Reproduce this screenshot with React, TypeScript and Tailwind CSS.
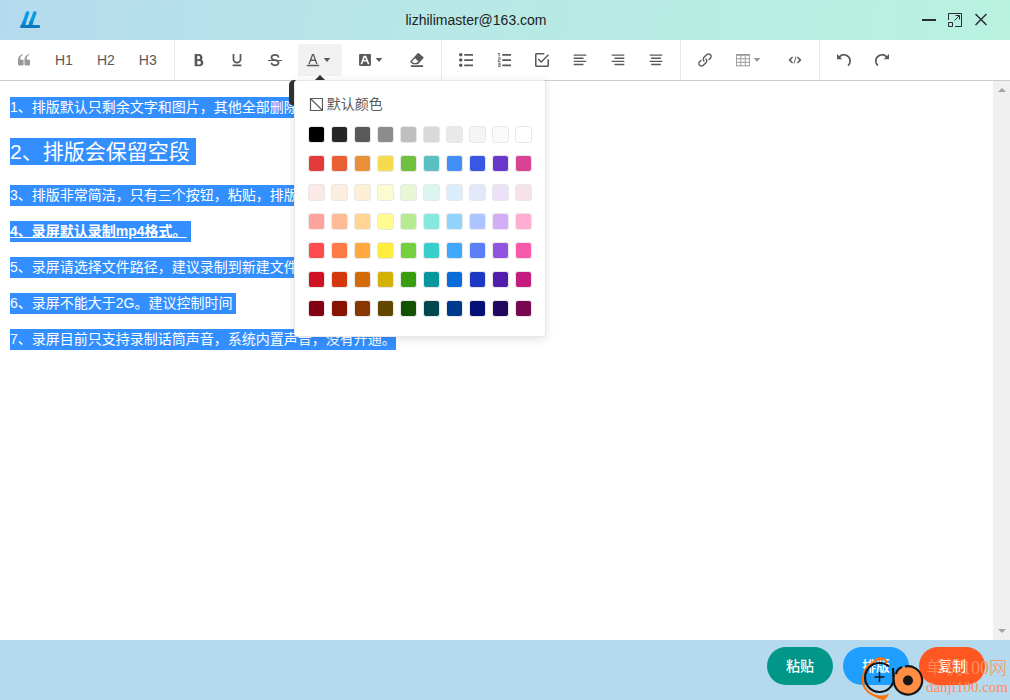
import React from "react";

const ICONS = {
  quote:
    "M894.6 907.1H605.4c-32.6 0-59-26.4-59-59V608.2l-4-14.9c0-315.9 125.5-485.1 376.5-507.5v59.8C752.7 180.4 711.3 315.8 711.3 442.4v41.2l31.5 12.3h151.8c32.6 0 59 26.4 59 59v293.2c0 32.5-26.4 59-59 59z m-472 0H133.4c-32.6 0-59-26.4-59-59V608.2l-4-14.9c0-315.9 125.5-485.1 376.5-507.5v59.8C280.7 180.4 239.3 315.8 239.3 442.4v41.2l31.5 12.3h151.8c32.6 0 59 26.4 59 59v293.2c0 32.5-26.4 59-59 59z",
  bold: "M707.9 484.6A254.9 254.9 0 0 0 768 320c0-141.2-114.8-256-256-256H192v896h384c141.2 0 256-114.8 256-256a256 256 0 0 0-124.1-219.4zM384 192h101.500c56 0 101.500 57.400 101.500 128s-45.500 128-101.500 128H384V192z m159 640H384v-256h159c58.500 0 106 57.400 106 128s-47.500 128-106 128z",
  underline:
    "M704 64h128v416c0 159-143.300 288-320 288s-320-129-320-288V64h128v416c0 40.200 18.200 78.700 51.400 108.500 36.900 33.200 86.800 51.500 140.600 51.500s103.700-18.300 140.600-51.500c33.100-29.800 51.400-68.400 51.400-108.500zM192 832h640v128H192z",
  strike:
    "M1024 512v64H789.500c27.500 38.500 42.500 82.700 42.500 128 0 70.900-36.700 139-100.600 187C672 935.500 594.100 960 512 960s-160-24.500-219.400-69C228.600 843 192 774.900 192 704h128c0 69.400 88 128 192 128s192-58.600 192-128-88-128-192-128H0v-64h299.500l-6.900-5C228.600 459 192 390.900 192 320s36.700-139 100.600-187C352 88.500 429.900 64 512 64s160 24.500 219.400 69C795.300 181 832 249.100 832 320H704c0-69.400-88-128-192-128s-192 58.600-192 128 88 128 192 128c79 0 154 22.700 212.500 64H1024z",
  color:
    "M64 864h896v96H64zM360.600 576h302.800l81.600 224h102.100L579.200 64H444.800L176.900 800H279l81.600-224zM512 160l116.500 320h-233L512 160z",
  background:
    "M510 315l84.700 197H417.500l76.800-197H510zM945.200 157.500v709c0 43.300-35.400 78.700-78.700 78.700h-709c-43.300 0-78.700-35.400-78.700-78.700v-709c0-43.300 35.400-78.700 78.700-78.700h709c43.300 0 78.700 35.400 78.700 78.700z m-108.300 644L600.600 216.600c-5.900-11.800-15.800-19.700-29.500-19.700H431.300c-11.800 0-23.700 7.900-27.600 19.700L187 801.500c-3.900 11.800 4 25.600 17.800 25.600h80.700c11.800 0 23.700-9.900 27.600-21.700l63-175.200H640l69 175.200c3.900 11.800 15.700 21.700 27.500 21.700h80.800c13.800 0 23.600-13.800 19.600-25.600z",
  eraser:
    "M969 289L650 18a67 67 0 0 0-96 6L48 590a68 68 0 0 0 6 103l157 132h373L975 385a67 67 0 0 0-6-96zM440 735H277L137 640l225-249 263 222zM64 896h896v128H64z",
  bullets:
    "M384 64h640v128H384z m0 384h640v128H384z m0 384h640v128H384zM0 128a128 128 0 1 1 256 0 128 128 0 0 1-256 0z m0 384a128 128 0 1 1 256 0 128 128 0 0 1-256 0z m0 384a128 128 0 1 1 256 0 128 128 0 0 1-256 0z",
  numbers:
    "M384 832h640v128H384z m0-384h640v128H384z m0-384h640v128H384zM192 0v256H128V64H64V0zM128 526v50h128v64H64V494l128-60v-50H64v-64h192v146zM256 704v320H64v-64h128v-64H64v-64h128v-64H64v-64z",
  todo: "M278.800 404l-79.700 79.600L455 739.600l569-569L944.400 91 455 580.300 278.800 404zM910.200 910.200H113.800V113.800h569V0h-569C51.200 0 0 51.200 0 113.800v796.400C0 972.800 51.200 1024 113.800 1024h796.400c62.600 0 113.800-51.200 113.800-113.800V455H910.200v455.200z",
  left: "M768 793.600V896H51.200V793.600H768z m204.800-230.400v102.400H51.200V563.200h921.600zM768 332.800v102.400H51.200V332.800H768zM972.800 102.400v102.400H51.200V102.400h921.600z",
  right:
    "M972.800 793.600V896H256V793.600h716.800z m0-230.400v102.400H51.200V563.200h921.600z m0-230.400v102.400H256V332.800h716.800z m0-230.400v102.400H51.200V102.400h921.600z",
  center:
    "M870.400 793.600V896H153.600V793.600h716.800z m102.400-230.400v102.400H51.200V563.200h921.600zM870.400 332.800v102.400H153.600V332.800h716.800zM972.800 102.400v102.400H51.200V102.400h921.600z",
  link: "M440.200 635.800a51.800 51.800 0 0 1-36.800-15.300c-95-95-95-249.900 0-345l192-192C641.500 37.400 702.800 12 768 12s126.400 25.400 172.500 71.500c95.200 95.100 95.200 249.900 0 345l-87.700 87.800a52 52 0 1 1-73.600-73.500l87.800-87.800a140 140 0 0 0 0-198c-26.400-26.400-61.600-41-99-41s-72.500 14.600-99 41l-192 192a140 140 0 0 0 0 198 52 52 0 0 1-36.800 88.800zM256 1012a242.400 242.400 0 0 1-172.500-71.500c-95.200-95-95.200-249.900 0-345l87.700-87.800a52 52 0 1 1 73.600 73.500L157 669a140 140 0 0 0 0 198c26.400 26.400 61.600 41 99 41s72.500-14.600 99-41l192-192a140 140 0 0 0 0-198 52 52 0 1 1 73.500-73.500c95.200 95 95.200 249.900 0 345l-192 192A242.400 242.400 0 0 1 256 1012z",
  table:
    "M0 64v896h1024V64H0z m384 576V448h256v192H384z m256 64v192H384V704h256z m0-512v192H384V192h256zM320 192v192H64V192h256zM64 448h256v192H64V448z m640 0h256v192H704V448z m0-64V192h256v192H704zM64 704h256v192H64V704z m640 192V704h256v192H704z",
  code: "M300 250l70 82-170 180 170 180-70 82L36 512zM724 250l-70 82 170 180-170 180 70 82 264-262zM552 250l64 18-144 506-64-18z",
  undo: "M512 64A510.300 510.300 0 0 0 150 214L0 64v384h384L240.500 304.500A382.800 382.800 0 0 1 512 192c212 0 384 172 384 384 0 114.700-50.300 217.600-130 288l84.700 96A510.700 510.700 0 0 0 1024 576c0-282.800-229.200-512-512-512z",
  redo: "M512 64A510.300 510.300 0 0 1 874 214L1024 64v384H640l143.500-143.500A382.800 382.800 0 0 0 512 192c-212 0-384 172-384 384 0 114.700 50.300 217.600 130 288l-84.700 96A510.700 510.700 0 0 1 0 576C0 293.200 229.200 64 512 64z",
  caret: "M270 366h484L512 658z",
};

type IconName = keyof typeof ICONS;

const Icon = ({ name }: { name: IconName }) => (
  <svg viewBox="0 0 1024 1024" className="size-3.5 shrink-0 fill-current" aria-hidden="true">
    <path d={ICONS[name]} />
  </svg>
);

interface Tool {
  label: string;
  icon?: IconName;
  text?: string;
  menu?: boolean;
  active?: boolean;
  disabled?: boolean;
}

const toolGroups: Tool[][] = [
  [
    { label: "引用", icon: "quote", disabled: true },
    { label: "标题1", text: "H1" },
    { label: "标题2", text: "H2" },
    { label: "标题3", text: "H3" },
  ],
  [
    { label: "粗体", icon: "bold" },
    { label: "下划线", icon: "underline" },
    { label: "删除线", icon: "strike" },
    { label: "文字颜色", icon: "color", menu: true, active: true },
    { label: "背景色", icon: "background", menu: true },
    { label: "清除格式", icon: "eraser" },
  ],
  [
    { label: "无序列表", icon: "bullets" },
    { label: "有序列表", icon: "numbers" },
    { label: "待办", icon: "todo" },
    { label: "左对齐", icon: "left" },
    { label: "右对齐", icon: "right" },
    { label: "居中对齐", icon: "center" },
  ],
  [
    { label: "链接", icon: "link" },
    { label: "表格", icon: "table", menu: true, disabled: true },
    { label: "代码块", icon: "code" },
  ],
  [
    { label: "撤销", icon: "undo" },
    { label: "重做", icon: "redo" },
  ],
];

const palette = [
  ["#000000", "#262626", "#595959", "#8c8c8c", "#bfbfbf", "#d9d9d9", "#e9e9e9", "#f5f5f5", "#fafafa", "#ffffff"],
  ["#e13c39", "#e75f33", "#eb903a", "#f5db4d", "#72c040", "#59bfc0", "#4290f7", "#3658e2", "#6a39c9", "#d84493"],
  ["#fbe9e6", "#fcede1", "#fcefd4", "#fcfbcf", "#e7f6d5", "#daf4f0", "#d9edfa", "#e0e8fa", "#ede1f8", "#f6e2ea"],
  ["#ffa39e", "#ffbb96", "#ffd591", "#fffb8f", "#b7eb8f", "#87e8de", "#91d5ff", "#adc6ff", "#d3adf7", "#ffadd2"],
  ["#ff4d4f", "#ff7a45", "#ffa940", "#ffec3d", "#73d13d", "#36cfc9", "#40a9ff", "#597ef7", "#9254de", "#f759ab"],
  ["#cf1322", "#d4380d", "#d46b08", "#d4b106", "#389e0d", "#08979c", "#096dd9", "#1d39c4", "#531dab", "#c41d7f"],
  ["#820014", "#871400", "#873800", "#614700", "#135200", "#00474f", "#003a8c", "#061178", "#22075e", "#780650"],
];

const ColorPanel = () => (
  <div className="absolute -left-1 top-9 z-20 w-[252px] rounded-[3px] border border-[#e8e8e8] bg-white px-2.5 pt-[9px] pb-[13px] shadow-[0_2px_10px_#0000001f]">
    <button type="button" className="mb-0.5 flex h-7 w-full items-center gap-1 px-1 text-sm text-[#595959]">
      <svg viewBox="0 0 14 14" className="size-3.5 fill-none stroke-current" aria-hidden="true">
        <path d="M1.500 1.500h12v12h-12zM1.500 1.500l12 12" strokeWidth="1.200" />
      </svg>
      默认颜色
    </button>
    <div className="grid grid-cols-10">
      {palette.flat().map((color) => (
        <button key={color} type="button" aria-label={color} className="flex h-[29px] items-center justify-center">
          <span
            className="size-[17px] rounded-[3px] border border-[#e8e8e8]"
            style={{ backgroundColor: color }}
          />
        </button>
      ))}
    </div>
  </div>
);

const ToolButton = ({ tool }: { tool: Tool }) => (
  <div className="relative p-1">
    <button
      type="button"
      aria-label={tool.label}
      disabled={tool.disabled}
      className={`flex h-8 items-center px-2 text-sm ${tool.disabled ? "text-[#999]" : "text-[#595959]"} ${
        tool.active ? "bg-[#f1f1f1]" : ""
      }`}
    >
      {tool.icon ? <Icon name={tool.icon} /> : tool.text}
      {tool.menu && <Icon name="caret" />}
    </button>
    {tool.active && (
      <div className="absolute inset-x-1 top-1">
        <span className="absolute top-[31px] left-1/2 -translate-x-1/2 border-x-5 border-b-5 border-x-transparent border-b-[#333]" />
        <span className="absolute -inset-x-[9px] top-9 z-10 h-[26px] rounded-[5px] bg-[#333]" />
        <ColorPanel />
      </div>
    )}
  </div>
);

const TitleBar = () => (
  <header className="flex h-10 items-center bg-[linear-gradient(100deg,#b5daee,#b7e8e6_45%,#b8f2df)] pr-[22px] pl-5 text-[#2b2b3b]">
    <svg viewBox="0 0 20 20" className="size-5" role="img" aria-label="Logo">
      <g fill="none" strokeLinecap="round" strokeLinejoin="round" strokeWidth="3.600">
        <path d="M7.500 3L3 16M14.800 3L10 16" stroke="#079ce4" />
        <path d="M4 13L2.800 16M11.500 12L10 16" stroke="#0889d2" />
        <path d="M1.600 16.500H18.500" stroke="#0878bf" strokeWidth="3.200" />
      </g>
    </svg>
    <h1 className="flex-1 text-center text-sm text-[#222]">lizhilimaster@163.com</h1>
    <div className="flex gap-3 pl-2.5">
      <button type="button" aria-label="最小化">
        <svg viewBox="0 0 14 14" className="size-3.5 fill-none stroke-current stroke-2">
          <path d="M0 7h14" />
        </svg>
      </button>
      <button type="button" aria-label="最大化">
        <svg viewBox="0 0 14 14" className="size-3.5 fill-none stroke-current">
          <path d="M.5 7V.5h13v13H7M.5 9.500h4v4h-4zM6.500 7.500L11 3M7.500 2.500h4v4" />
        </svg>
      </button>
      <button type="button" aria-label="关闭">
        <svg viewBox="0 0 14 14" className="size-3.5 fill-none stroke-current">
          <path d="M1.500 1l11 11M12.500 1l-11 11" strokeWidth="1.500" />
        </svg>
      </button>
    </div>
  </header>
);

const Toolbar = () => (
  <div className="flex h-[41px] border-b border-[#ccc] bg-white px-[5px]">
    {toolGroups.map((group, index) => (
      <React.Fragment key={index}>
        {index > 0 && <div className="mx-[5px] w-px bg-[#e8e8e8]" />}
        {group.map((tool) => (
          <ToolButton key={tool.label} tool={tool} />
        ))}
      </React.Fragment>
    ))}
  </div>
);

const marked = "bg-[#338fff] text-white";

const Editor = () => (
  <main className="flex min-h-0 flex-1 bg-white">
    <div className="flex min-w-0 flex-1 flex-col items-start gap-[15px] overflow-hidden px-2.5 pt-4 text-sm leading-[21px]">
      <p className={marked}>1、排版默认只剩余文字和图片，其他全部删除。</p>
      <p className={`${marked} my-[5px] pr-1.5 text-[21px] leading-[27px]`}>2、排版会保留空段</p>
      <p className={marked}>3、排版非常简洁，只有三个按钮，粘贴，排版，复制。</p>
      <p className={`${marked} pr-1 font-bold underline`}>4、录屏默认录制mp4格式。</p>
      <p className={marked}>5、录屏请选择文件路径，建议录制到新建文件夹。</p>
      <p className={`${marked} pr-1`}>6、录屏不能大于2G。建议控制时间</p>
      <p className={marked}>7、录屏目前只支持录制话筒声音，系统内置声音，没有开通。</p>
    </div>
    <div className="flex w-[17px] flex-col items-center justify-between bg-[#f0f0f0] py-[7px]">
      <span className="border-x-4 border-b-4 border-x-transparent border-b-[#a3a3a3]" />
      <span className="border-x-4 border-t-4 border-x-transparent border-t-[#a3a3a3]" />
    </div>
  </main>
);

const Watermark = () => (
  <div className="pointer-events-none absolute right-0 bottom-0 flex h-11 items-center text-[#ff9058]">
    <svg viewBox="0 0 66 44" className="h-11 w-[66px]" aria-hidden="true">
      <path
        d="M27 7C25 1 17 1 14 6C6 9 2 18 3 27C5 36 14 41 23 41"
        fill="none"
        stroke="#ff730d"
        strokeWidth="2"
      />
      <path d="M14 6Q20-2 27 5Q20 3 14 6zM13 39Q21 41 29 38Q26 44 23 44Q17 43 13 39z" fill="#ff730d" />
      <path d="M29 32.500A14.500 14.500 0 1 1 29 10.500M33 16A14.500 14.500 0 0 1 29 32.500" fill="none" stroke="#161616" strokeWidth="2.200" />
      <path d="M19.500 16v10M14.500 21h10" stroke="#161616" strokeWidth="1.500" />
      <circle cx="48" cy="24.500" r="14" fill="#ff8d43" />
      <path d="M45 10.500A14.200 14.200 0 1 1 34.500 29C33 24 33.500 19 33 12M36 18Q37 13 42 11" fill="none" stroke="#161616" strokeWidth="2.200" />
      <circle cx="48" cy="24.500" r="5" fill="#161616" />
    </svg>
    <div className="pb-0.5 pr-0.5 font-['Liberation_Serif','Noto_Sans_CJK_SC',serif] whitespace-nowrap">
      <div className="text-lg leading-5 font-light">单机100网</div>
      <div className="text-[15px] leading-[18px]">danji100.com</div>
    </div>
  </div>
);

const actions = [
  { label: "粘贴", style: "bg-[#009688]" },
  { label: "排版", style: "bg-[#1e9fff]" },
  { label: "复制", style: "bg-[#ff5722]" },
];

const Footer = () => (
  <footer className="relative flex h-[60px] items-start justify-end gap-2.5 bg-[#b5daee] pt-[7px] pr-[25px]">
    {actions.map((action) => (
      <button
        key={action.label}
        type="button"
        className={`h-[38px] rounded-full px-[19px] text-sm font-medium text-white ${action.style}`}
      >
        {action.label}
      </button>
    ))}
    <Watermark />
  </footer>
);

export default function App() {
  return (
    <div className="flex h-screen flex-col overflow-hidden font-['Liberation_Sans','Noto_Sans_CJK_SC',sans-serif]">
      <TitleBar />
      <Toolbar />
      <Editor />
      <Footer />
    </div>
  );
}
